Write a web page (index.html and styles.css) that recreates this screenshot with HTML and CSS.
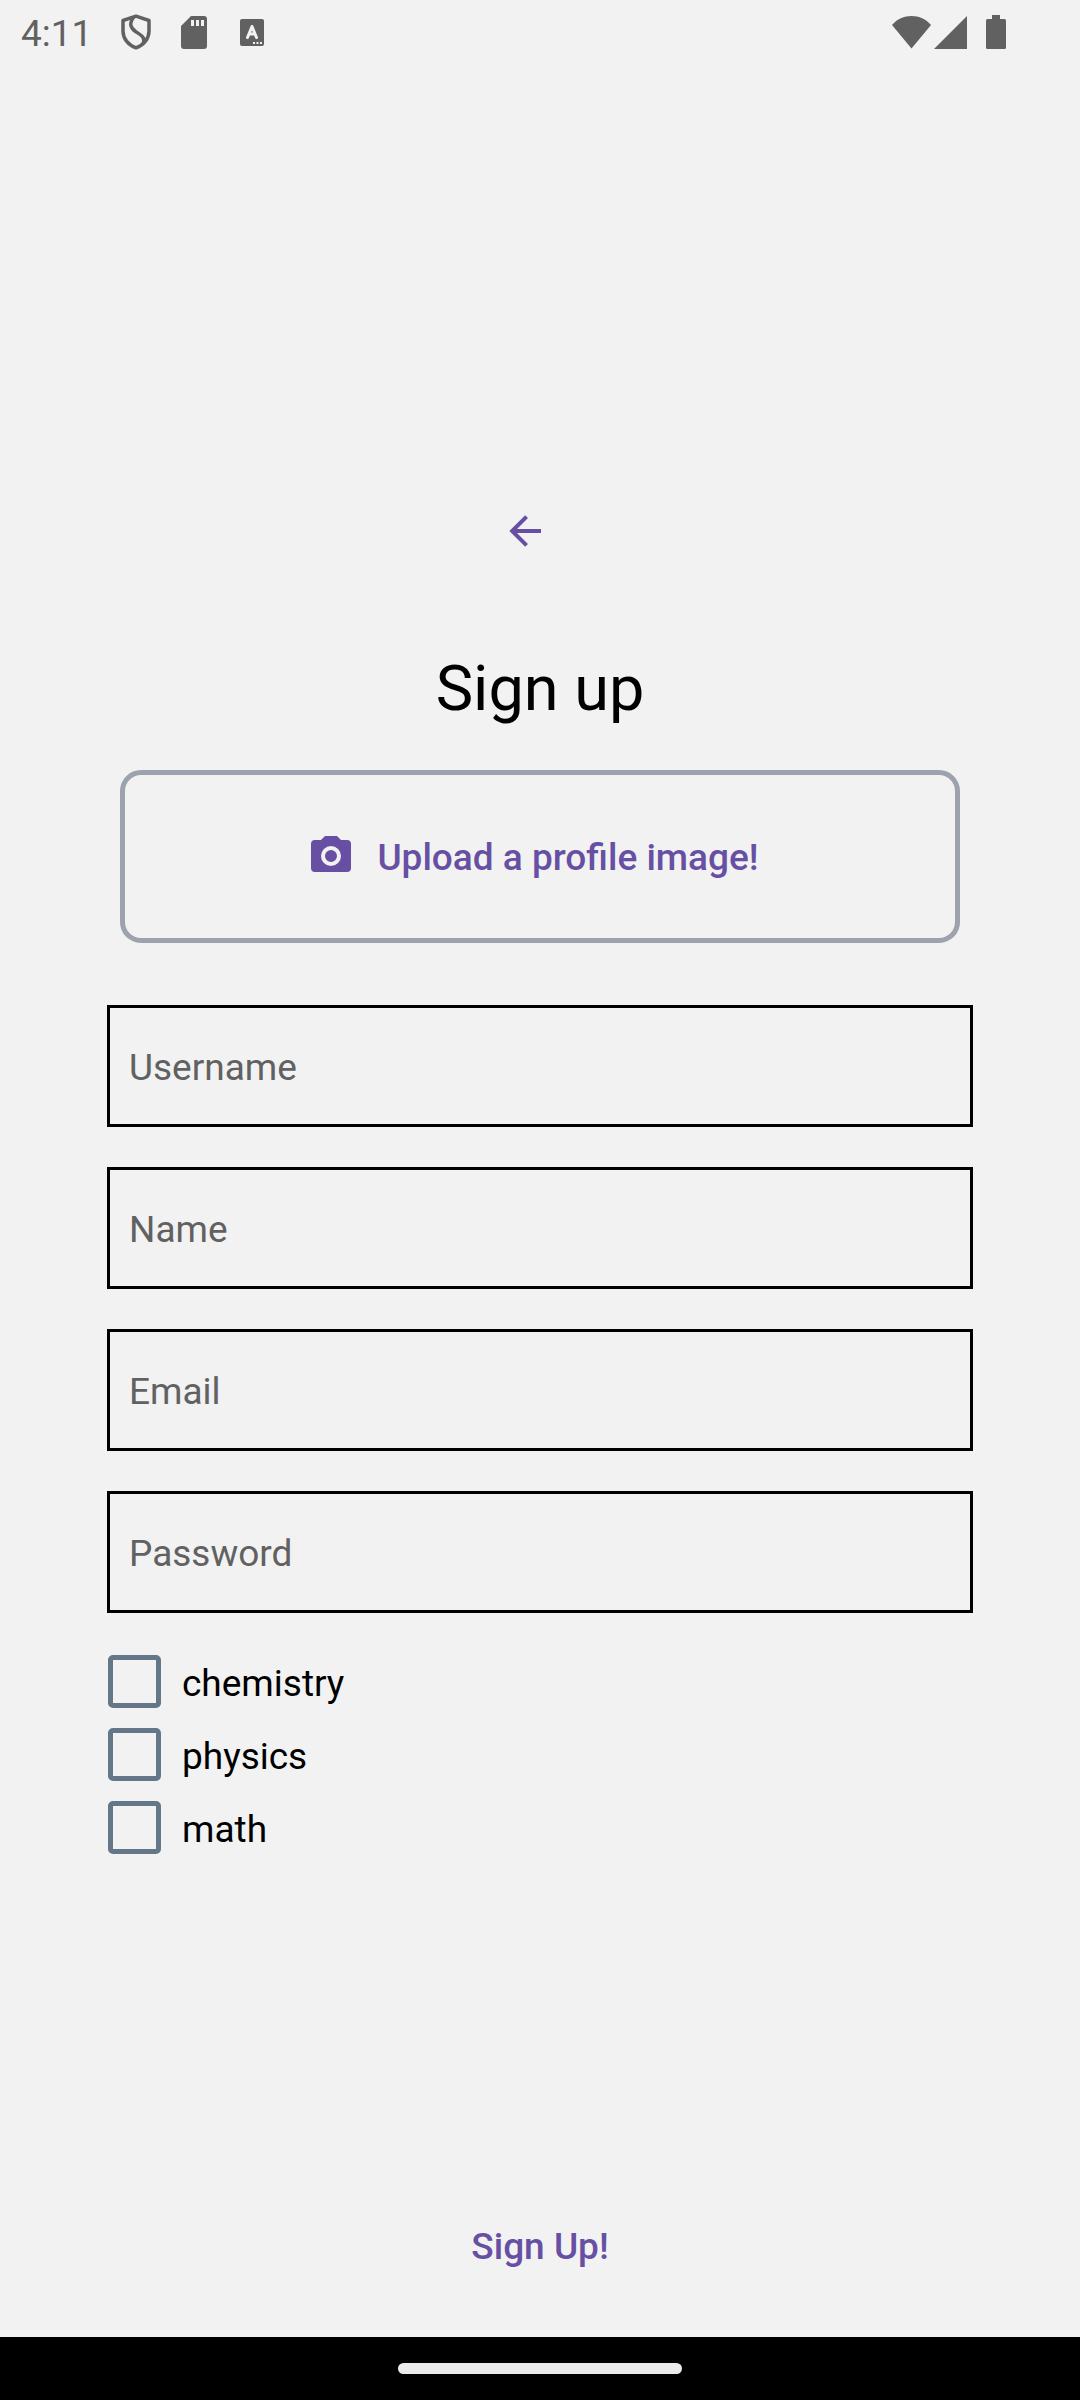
FILE: index.html
```html
<!DOCTYPE html>
<html lang="en">
<head>
<meta charset="utf-8">
<meta name="viewport" content="width=device-width, initial-scale=1">
<title>Sign up</title>
<link rel="stylesheet" href="styles.css">
</head>
<body>
<div class="screen">
  <header class="status-bar">
    <span class="clock">4:11</span>
    <div class="status-left">
      <svg class="shield" width="30" height="36" viewBox="0 0 30 36" fill="none" stroke="currentColor" stroke-width="3.500" stroke-linejoin="round" aria-hidden="true">
        <path d="M15 2.200 28 6.500V17c0 7.500-5 14-13 16.800C7 31 2 24.500 2 17V6.500z"/>
        <path d="M13 3C8 9 9 13.500 14.500 17.500 20.500 21.500 24 23 22.500 29"/>
      </svg>
      <svg class="sd-card" width="26" height="33" viewBox="0 0 26 33" aria-hidden="true">
        <path fill="currentColor" fill-rule="evenodd" d="M10 0h13a3 3 0 0 1 3 3v27a3 3 0 0 1-3 3H3a3 3 0 0 1-3-3V10zM10 4v6h3V4zM15 4v6h3V4zM20 4v6h3V4z"/>
      </svg>
      <svg class="keyboard" width="24" height="27" viewBox="0 0 24 27" aria-hidden="true">
        <rect width="24" height="27" rx="2" fill="currentColor"/>
        <path d="M7.500 18.500 12 7.500l4.500 11M9 15h6" fill="none" stroke="#f2f2f2" stroke-width="3" stroke-linecap="round" stroke-linejoin="round"/>
        <path d="M13 23h2v2h-2zM16.500 23h2v2h-2zM20 23h2v2h-2z" fill="#f2f2f2"/>
      </svg>
    </div>
    <div class="status-right">
      <svg width="39" height="33" viewBox="0 0 39 33" fill="currentColor" aria-hidden="true"><path d="M0 9C5 3 12 0 19.500 0S34 3 39 9L19.500 32.500z"/></svg>
      <svg class="signal" width="33" height="33" viewBox="0 0 33 33" fill="currentColor" aria-hidden="true"><path d="M33 0v33H0z"/></svg>
      <svg width="20" height="34" viewBox="0 0 20 34" fill="currentColor" aria-hidden="true"><path d="M6 0h8v4h4.500A1.500 1.500 0 0 1 20 5.500v27a1.500 1.500 0 0 1-1.500 1.500h-17A1.500 1.500 0 0 1 0 32.500v-27A1.500 1.500 0 0 1 1.500 4H6z"/></svg>
    </div>
  </header>

  <main class="content">
    <button class="back" type="button" aria-label="Back">
      <svg width="48" height="48" viewBox="0 0 24 24" fill="currentColor" aria-hidden="true"><path d="M20 11v2H8l5.500 5.500-1.420 1.420L4.160 12l7.920-7.920L13.500 5.500 8 11z"/></svg>
    </button>
    <h1 class="title">Sign up</h1>

    <form class="form">
      <button class="upload" type="button">
        <svg class="camera" width="48" height="48" viewBox="0 0 24 24" fill="currentColor" aria-hidden="true"><path d="M4 4h3l2-2h6l2 2h3a2 2 0 0 1 2 2v12a2 2 0 0 1-2 2H4a2 2 0 0 1-2-2V6a2 2 0 0 1 2-2m8 3a5 5 0 0 0-5 5 5 5 0 0 0 5 5 5 5 0 0 0 5-5 5 5 0 0 0-5-5m0 2a3 3 0 0 1 3 3 3 3 0 0 1-3 3 3 3 0 0 1-3-3 3 3 0 0 1 3-3"/></svg>
        <span>Upload a profile image!</span>
      </button>

      <div class="fields">
        <input class="field" type="text" placeholder="Username" aria-label="Username">
        <input class="field" type="text" placeholder="Name" aria-label="Name">
        <input class="field" type="email" placeholder="Email" aria-label="Email">
        <input class="field" type="password" placeholder="Password" aria-label="Password">
      </div>

      <div class="subjects">
        <label class="subject"><input class="check" type="checkbox"><span>chemistry</span></label>
        <label class="subject"><input class="check" type="checkbox"><span>physics</span></label>
        <label class="subject"><input class="check" type="checkbox"><span>math</span></label>
      </div>

      <button class="submit" type="submit">Sign Up!</button>
    </form>
  </main>

  <footer class="nav-bar"><div class="handle"></div></footer>
</div>
</body>
</html>
```
FILE: styles.css
```css
* {
  box-sizing: border-box;
}

body {
  margin: 0;
  background: #f2f2f2;
  color: #000;
  font-family: Roboto, sans-serif;
  font-size: 37px;
  line-height: 44px;
}

button,
input {
  margin: 0;
  font: inherit;
}

button {
  border: 0;
  padding: 0;
  background: none;
  color: #6750a4;
  font-weight: 500;
  cursor: pointer;
}

svg {
  display: block;
  flex: none;
}

.screen {
  display: flex;
  flex-direction: column;
  min-height: 100vh;
}

.status-bar {
  display: flex;
  align-items: center;
  height: 64px;
  padding: 0 74px 0 21px;
  color: #616161;
}

.clock {
  padding-top: 3px;
}

.status-left {
  display: flex;
  align-items: center;
  gap: 30px;
  padding-left: 29px;
}

.keyboard {
  margin-left: 3px;
}

.status-right {
  display: flex;
  align-items: center;
  gap: 3px;
  margin-left: auto;
}

.signal {
  margin-right: 16px;
}

.content {
  display: flex;
  flex: 1;
  flex-direction: column;
  padding: 443px 107px 56px;
}

.back {
  align-self: center;
  padding-right: 30px;
}

.title {
  margin: 94px 0 41px;
  font-size: 63px;
  font-weight: 400;
  line-height: 80px;
  text-align: center;
}

.form {
  display: flex;
  flex: 1;
  flex-direction: column;
}

.upload {
  display: flex;
  align-items: center;
  justify-content: center;
  gap: 22px;
  margin: 0 13px 62px;
  padding: 57px 14px 58px 0;
  border: 5px solid #9ca3af;
  border-radius: 21px;
}

.upload span {
  padding-top: 4px;
}

.fields {
  display: flex;
  flex-direction: column;
  gap: 40px;
}

.field {
  width: 100%;
  padding: 39px 20px 36px 19px;
  height: 122px;
  border: 3px solid #000;
  border-radius: 0;
  background: transparent;
  color: #000;
}

.field::placeholder {
  color: #616161;
  opacity: 1;
}

.subjects {
  display: flex;
  flex-direction: column;
  gap: 20px;
  margin: 42px 1px 60px;
}

.subject {
  display: flex;
  align-items: center;
  gap: 21px;
}

.subject span {
  padding-top: 4px;
}

.check {
  flex: none;
  width: 53px;
  height: 53px;
  border: 5px solid #647789;
  border-radius: 5px;
  appearance: none;
}

.check:checked {
  background: #647789;
}

.submit {
  align-self: center;
  margin-top: auto;
  padding: 12px 30px;
}

.nav-bar {
  display: flex;
  align-items: center;
  justify-content: center;
  padding: 26px 0;
  background: #000;
}

.handle {
  width: 284px;
  height: 11px;
  border-radius: 6px;
  background: #ebebeb;
}
```
